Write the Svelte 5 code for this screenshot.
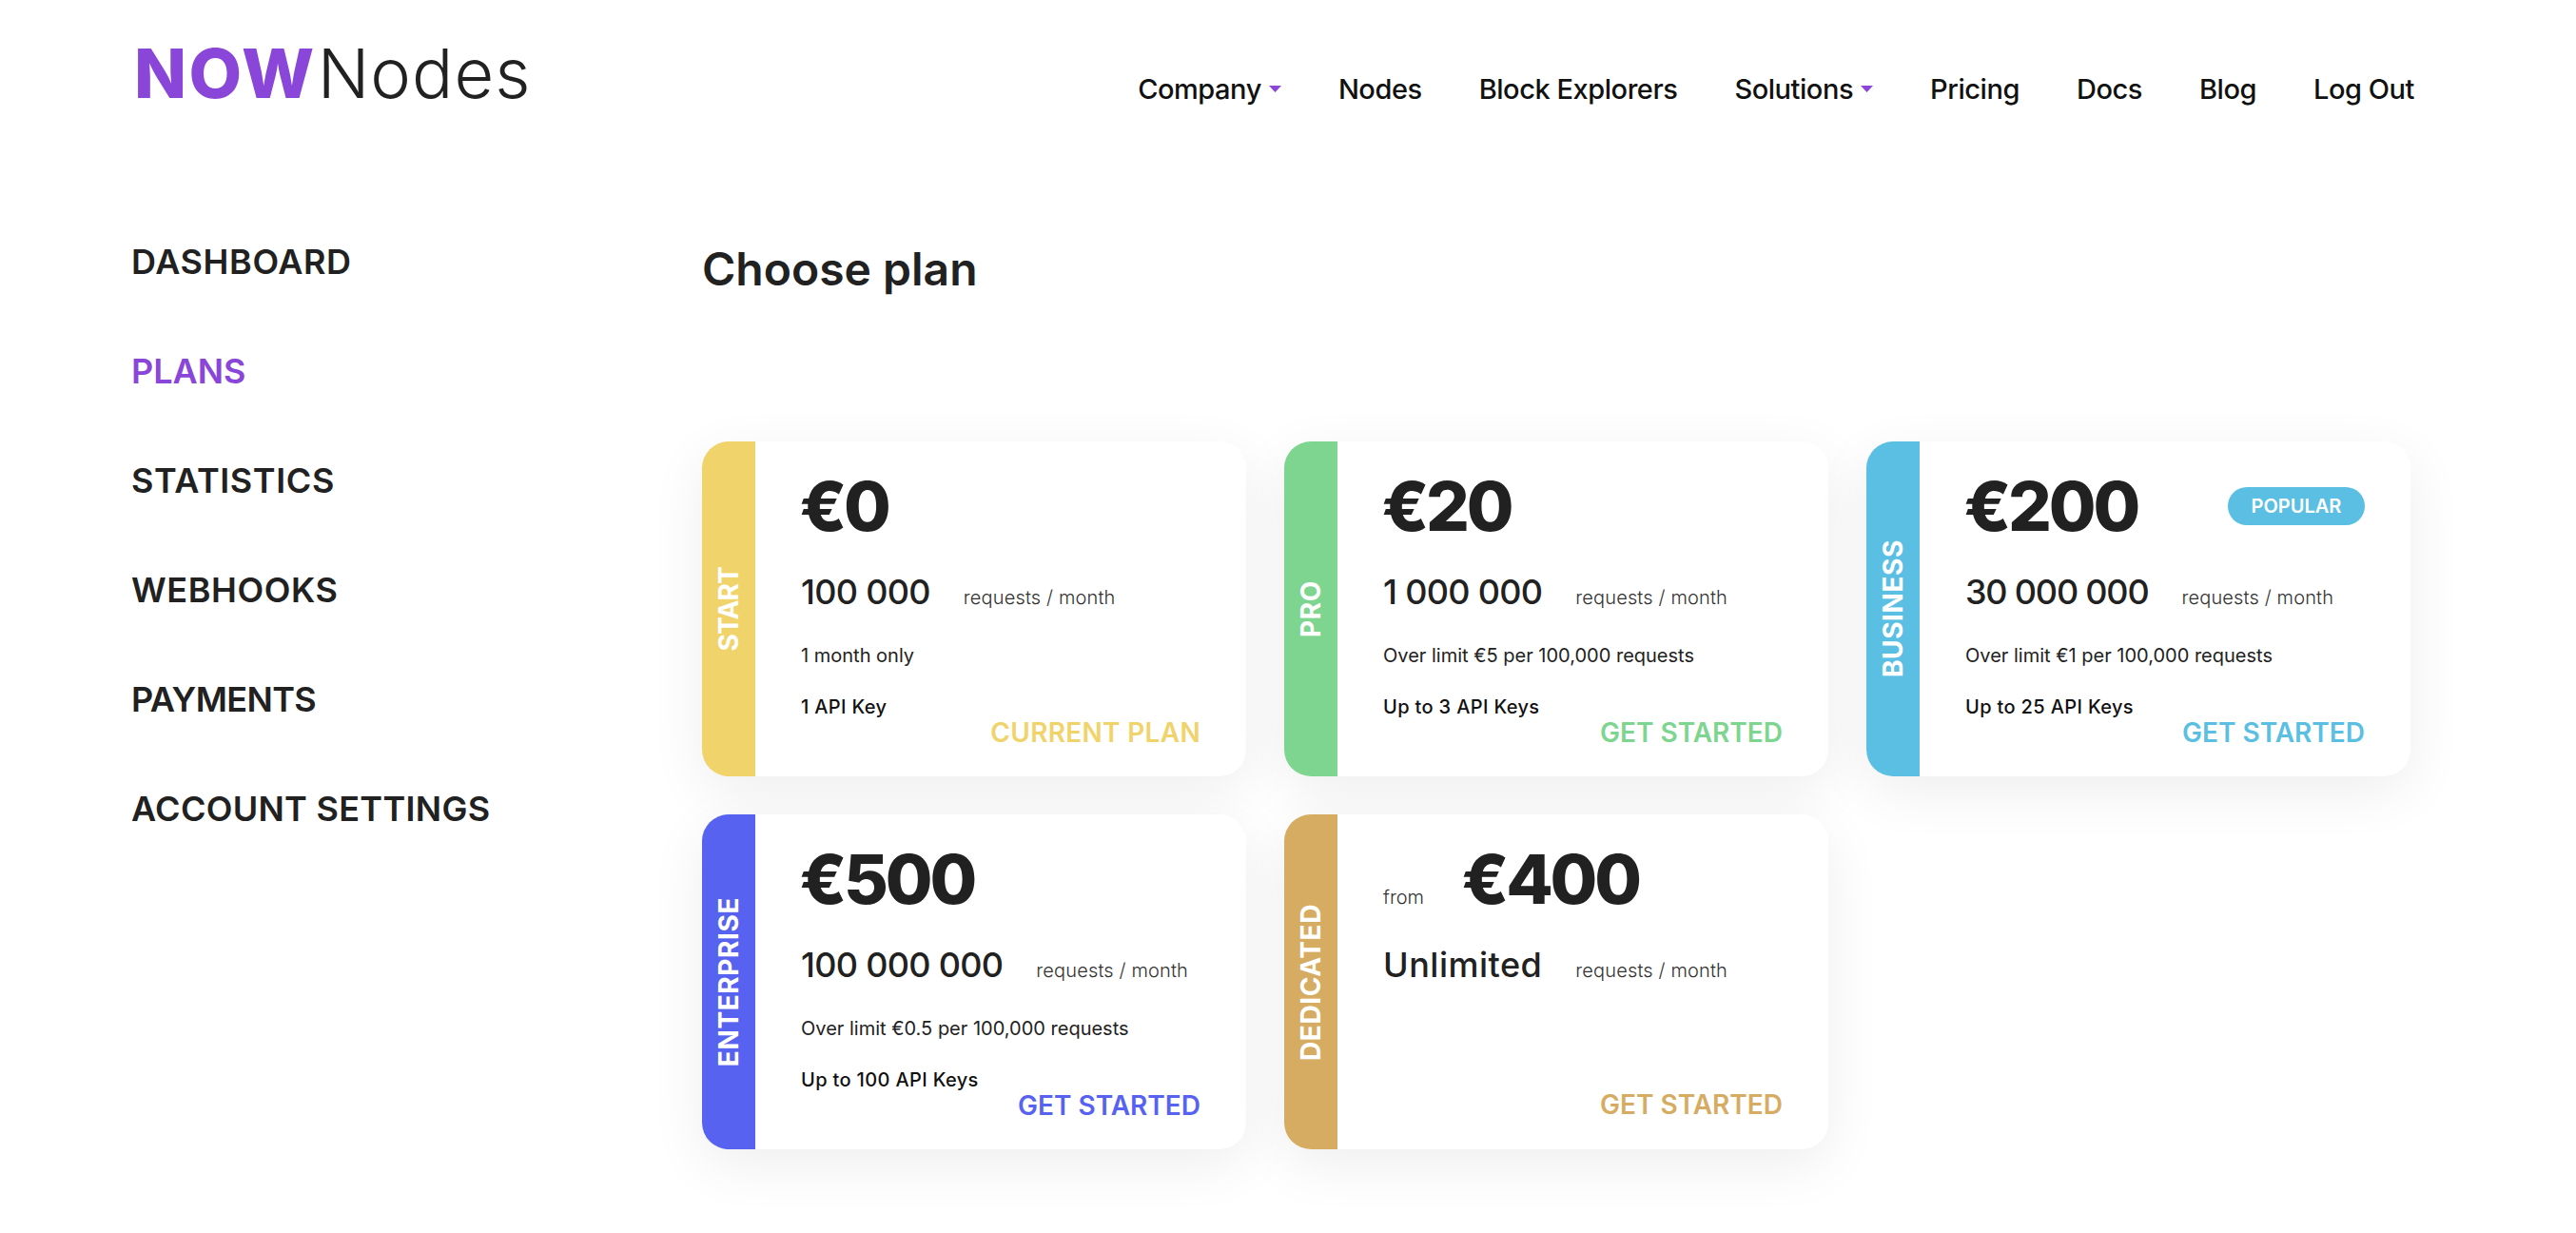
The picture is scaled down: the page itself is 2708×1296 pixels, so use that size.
<script>
  const nav = [
    { label: 'Company', caret: true },
    { label: 'Nodes' },
    { label: 'Block Explorers' },
    { label: 'Solutions', caret: true },
    { label: 'Pricing' },
    { label: 'Docs' },
    { label: 'Blog' },
    { label: 'Log Out' }
  ];
  const side = ['DASHBOARD', 'PLANS', 'STATISTICS', 'WEBHOOKS', 'PAYMENTS', 'ACCOUNT SETTINGS'];
  const plans = [
    { name: 'START', color: '#f0d36b', price: '€0', req: '100 000', note: '1 month only', keys: '1 API Key', action: 'CURRENT PLAN' },
    { name: 'PRO', color: '#7dd58f', price: '€20', req: '1 000 000', note: 'Over limit €5 per 100,000 requests', keys: 'Up to 3 API Keys', action: 'GET STARTED' },
    { name: 'BUSINESS', color: '#5bbfe3', price: '€200', req: '30 000 000', note: 'Over limit €1 per 100,000 requests', keys: 'Up to 25 API Keys', action: 'GET STARTED', popular: true },
    { name: 'ENTERPRISE', color: '#5763f0', price: '€500', req: '100 000 000', note: 'Over limit €0.5 per 100,000 requests', keys: 'Up to 100 API Keys', action: 'GET STARTED' },
    { name: 'DEDICATED', color: '#d6ac62', price: '€400', from: true, req: 'Unlimited', action: 'GET STARTED' }
  ];
</script>

<div class="page">
  <header class="header">
    <div class="logo"><b>NOW</b><span>Nodes</span></div>
    <nav class="nav">
      {#each nav as item}
        <a class="nav-item">{item.label}{#if item.caret}<svg class="caret" width="13" height="8" viewBox="0 0 13 8"><path d="M0 1h13L6.5 8z" fill="#8a46d8" /></svg>{/if}</a>
      {/each}
    </nav>
  </header>

  <div class="main">
    <aside class="side">
      {#each side as item}
        <a class="side-item" class:active={item === 'PLANS'} class:tight={item === 'PAYMENTS'} class:long={item === 'ACCOUNT SETTINGS'}>{item}</a>
      {/each}
    </aside>

    <section class="content">
      <h1>Choose plan</h1>
      <div class="grid">
        {#each plans as p}
          <article class="card" style="--c:{p.color}">
            <div class="stripe"><span class:short={p.name === 'START'}>{p.name}</span></div>
            <div class="body">
              <div class="price-row" class:from-row={p.from}>
                {#if p.from}<span class="from">from</span>{/if}
                <span class="price">{p.price}</span>
                {#if p.popular}<span class="badge">POPULAR</span>{/if}
              </div>
              <div class="req" class:unl={p.from}>
                <span class="req-num" class:narrow={p.req === '30 000 000'}>{p.req}</span>
                <span class="req-unit">requests / month</span>
              </div>
              {#if p.note}
                <div class="note">{p.note}</div>
                <div class="keys">{p.keys}</div>
              {/if}
              <a class="action" class:current={p.action === 'CURRENT PLAN'}>{p.action}</a>
            </div>
          </article>
        {/each}
      </div>
    </section>
  </div>
</div>

<style>
  :global(body) {
    margin: 0;
    background: #fff;
    font-family: Inter, "Noto Sans", sans-serif;
    color: #212121;
  }
  .page {
    width: 2708px;
    height: 1296px;
    overflow: hidden;
  }
  .header {
    display: flex;
    justify-content: space-between;
    align-items: flex-start;
    padding: 0 170px 0 141px;
    height: 188px;
  }
  .logo {
    font-size: 72px;
    line-height: 90px;
    margin-top: 32px;
  }
  .logo b { color: #8a46d8; font-weight: 800; letter-spacing: 2.4px; }
  .logo span { font-weight: 300; margin-left: 1px; letter-spacing: 1px; }
  .nav {
    display: flex;
    gap: 60px;
    margin-top: 74px;
  }
  .nav-item {
    font-size: 29px;
    letter-spacing: -0.45px;
    line-height: 40px;
    font-weight: 500;
    color: #111;
    display: flex;
    align-items: center;
    white-space: nowrap;
  }
  .caret { margin-left: 8px; margin-top: -2px; }

  .main {
    display: flex;
    padding-left: 138px;
  }
  .side {
    width: 600px;
    display: flex;
    flex-direction: column;
    gap: 65px;
    margin-top: 62px;
  }
  .side-item {
    font-size: 36px;
    line-height: 50px;
    font-weight: 600;
    letter-spacing: 0.6px;
    color: #212121;
  }
  .side-item.long { letter-spacing: 0.3px; }
  .side-item.tight { letter-spacing: -0.6px; }
  .side-item.active { color: #8a46d8; letter-spacing: 0; }

  .content { flex: 1; }
  h1 {
    margin: 62px 0 0;
    font-size: 48px;
    line-height: 66px;
    font-weight: 600;
    color: #212121;
  }
  .grid {
    display: grid;
    grid-template-columns: repeat(3, 572px);
    grid-auto-rows: 352px;
    gap: 40px;
    margin-top: 148px;
  }
  .card {
    display: flex;
    border-radius: 28px;
    background: #fff;
    overflow: hidden;
    box-shadow: 0 16px 60px rgba(0, 0, 0, 0.07);
  }
  .stripe {
    flex: 0 0 56px;
    background: var(--c);
    display: flex;
    align-items: center;
    justify-content: center;
  }
  .stripe span {
    writing-mode: vertical-rl;
    transform: rotate(180deg);
    color: #fff;
    font-size: 28px;
    line-height: 32px;
    font-weight: 700;
    letter-spacing: 0.6px;
    white-space: nowrap;
  }
  .stripe span.short { letter-spacing: -0.8px; }
  .body {
    flex: 1;
    display: flex;
    flex-direction: column;
    padding: 23px 48px 33px;
    min-width: 0;
  }
  .price-row {
    display: flex;
    align-items: center;
    justify-content: space-between;
    height: 90px;
  }
  .price-row.from-row {
    justify-content: flex-start;
    align-items: baseline;
    gap: 41px;
  }
  .price {
    font-size: 72px;
    line-height: 90px;
    font-weight: 800;
    letter-spacing: -3.2px;
    margin-left: -1.5px;
    color: #212121;
  }
  .from {
    font-size: 20px;
    font-weight: 300;
    color: #333;
  }
  .badge {
    background: #5bbfe3;
    color: #fff;
    font-size: 20px;
    font-weight: 600;
    height: 40px;
    line-height: 40px;
    width: 144px;
    text-align: center;
    border-radius: 20px;
  }
  .req {
    display: flex;
    align-items: baseline;
    gap: 35px;
    margin-top: 23px;
    height: 44px;
  }
  .req-num {
    font-size: 36px;
    line-height: 44px;
    font-weight: 500;
    letter-spacing: -0.7px;
    color: #212121;
  }
  .req-num.narrow { letter-spacing: -1.2px; }
  .unl .req-num { letter-spacing: 0.5px; }
  .req-unit {
    font-size: 20px;
    font-weight: 300;
    letter-spacing: 0.15px;
    color: #333;
  }
  .note {
    font-size: 20px;
    line-height: 26px;
    font-weight: 400;
    color: #222;
    margin-top: 32px;
  }
  .keys {
    font-size: 20px;
    line-height: 26px;
    font-weight: 500;
    letter-spacing: 0.35px;
    color: #111;
    margin-top: 28px;
  }
  .action {
    margin-top: auto;
    align-self: flex-end;
    font-size: 28px;
    line-height: 28px;
    font-weight: 600;
    color: var(--c);
  }
  .action.current { letter-spacing: 0.3px; }
</style>
